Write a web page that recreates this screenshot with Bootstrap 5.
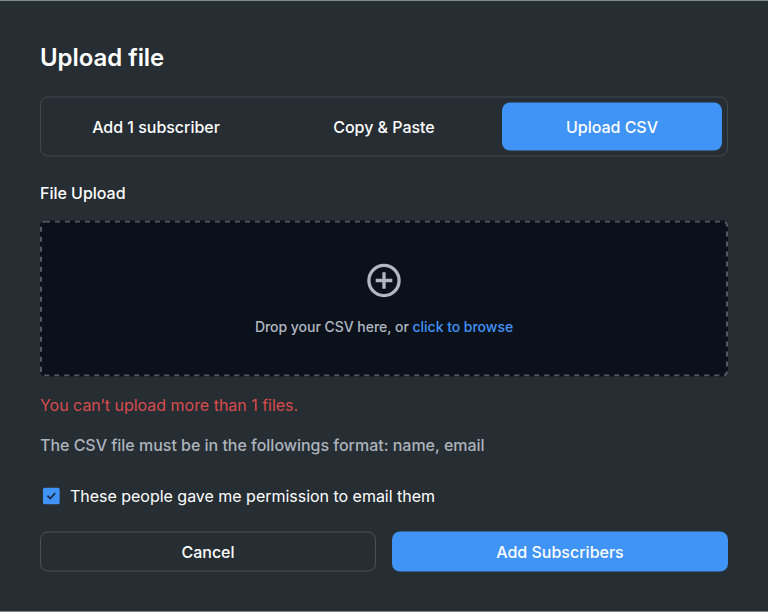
<!DOCTYPE html>
<html lang="en">
<head>
<meta charset="utf-8">
<meta name="viewport" content="width=device-width, initial-scale=1">
<title>Upload file</title>
<link href="https://cdn.jsdelivr.net/npm/bootstrap@5.3.0/dist/css/bootstrap.min.css" rel="stylesheet">
<style>
body{background:#262d33;color:#fff;font-family:Inter,"Liberation Sans",sans-serif;font-size:16px;line-height:24px;letter-spacing:-.02px}
.dialog-panel{height:612px;padding:41px 40px 0;border-top:1px solid #808b91;border-bottom:1px solid #7c8087}
.dialog-title{font-size:24px;line-height:32px;font-weight:600;margin-bottom:23px;letter-spacing:-.05px}
.tab-strip{height:60px;padding:5px;border:1px solid #414950;border-radius:8px;gap:8px;margin-bottom:24px;transform:translateY(-.5px)}
.tab-strip .nav-link{height:48px;padding:12px 0;line-height:24px;color:#fff;font-weight:500;border-radius:8px}
.tab-strip .nav-link.active{background:#4094f7;font-weight:500}
.field-label{font-weight:500;margin-bottom:16px}
.drop-area{height:156px;background:#0b111a;border-radius:5px;padding-top:39.5px;margin-bottom:16px;transform:translateY(-.5px)}
.drop-frame{inset:0;width:100%;height:100%}
.drop-hint{font-size:14px;line-height:20px;font-weight:500;color:#b1b8c2;margin-top:16px;letter-spacing:-.03px}
.drop-hint a{color:#4094f7}
.error-text{color:#d84c4c;margin-bottom:16px}
.format-text{color:#adb4bc;font-weight:500;margin-bottom:27px}
.consent-row{margin-bottom:24px}
.consent-row svg{margin-left:2.5px;margin-right:10.5px;transform:translate(-.2px,-.5px)}
.action-row{transform:translateY(-.5px)}
.action-btn{height:40px;padding:0;border-radius:8px;font-weight:500;color:#fff}
.action-cancel{border:1px solid #4b5158}
.action-add{background:#4094f7;border:0}
</style>
</head>
<body>
<main class="dialog-panel">
  <h1 class="dialog-title">Upload file</h1>
  <nav class="tab-strip nav nav-pills nav-fill flex-nowrap">
    <a class="nav-link w-100" href="#">Add 1 subscriber</a>
    <a class="nav-link w-100" href="#">Copy &amp; Paste</a>
    <a class="nav-link w-100 active" href="#">Upload CSV</a>
  </nav>
  <div class="field-label">File Upload</div>
  <div class="drop-area position-relative d-flex flex-column align-items-center">
    <svg class="drop-frame position-absolute" viewBox="0 0 688 156" fill="none"><rect x="1" y="1" width="686" height="154" rx="4" stroke="#535a62" stroke-width="2" stroke-dasharray="5 5"/></svg>
    <svg width="40" height="40" viewBox="0 0 40 40" fill="none" stroke="#b1b8c2" stroke-width="3.3"><circle cx="20" cy="20" r="15.1"/><path d="M20 11.7v16.6M11.7 20h16.6"/></svg>
    <div class="drop-hint">Drop your CSV here, or <a class="text-decoration-none" href="#">click to browse</a></div>
  </div>
  <div class="error-text">You can’t upload more than 1 files.</div>
  <div class="format-text">The CSV file must be in the followings format: name, email</div>
  <div class="consent-row d-flex align-items-center" role="checkbox" aria-checked="true">
    <svg width="17" height="17" viewBox="0 0 17 17" fill="none"><rect width="17" height="17" rx="2.5" fill="#4094f7"/><path d="M4.6 8.2l2.8 2.8 5-5.4" stroke="#1d2b42" stroke-width="1.7"/></svg>
    <span>These people gave me permission to email them</span>
  </div>
  <div class="action-row row gx-3">
    <div class="col-6"><button class="btn action-btn action-cancel w-100" type="button">Cancel</button></div>
    <div class="col-6"><button class="btn action-btn action-add w-100" type="button">Add Subscribers</button></div>
  </div>
</main>
<script src="https://cdn.jsdelivr.net/npm/bootstrap@5.3.0/dist/js/bootstrap.bundle.min.js"></script>
</body>
</html>
